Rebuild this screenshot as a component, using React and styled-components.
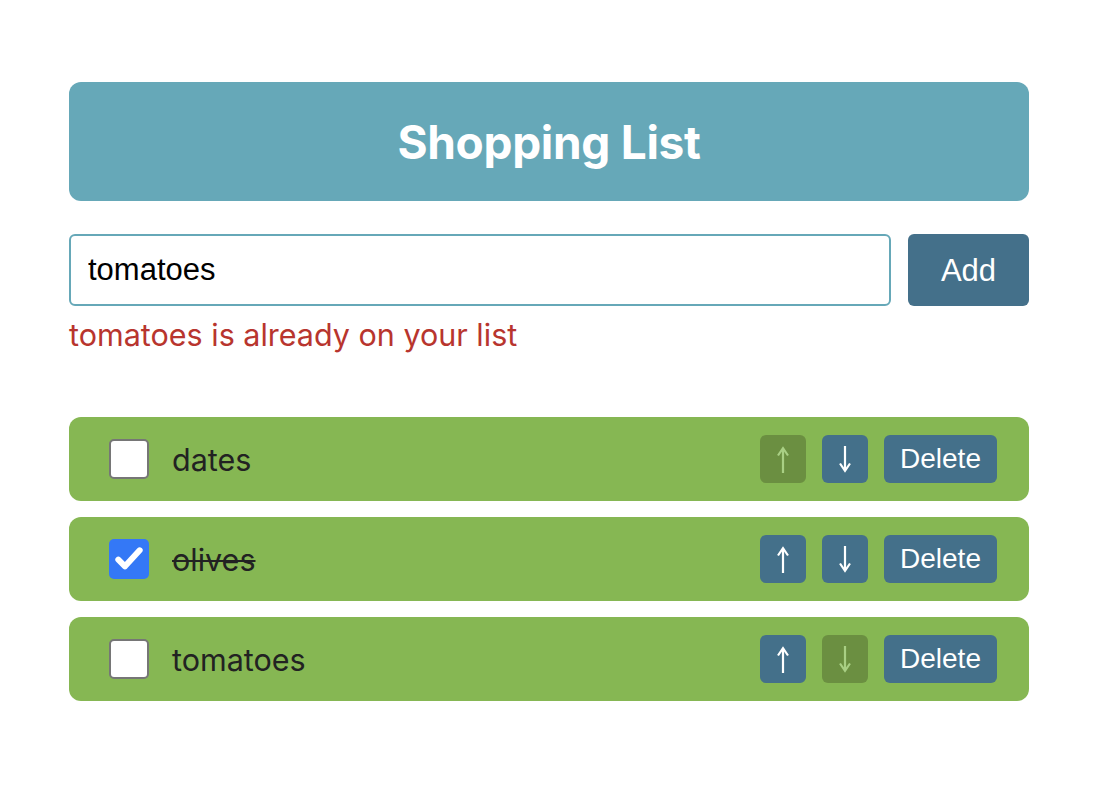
import styled, { createGlobalStyle } from "styled-components";
import { useState } from "react";

const GlobalStyle = createGlobalStyle`
  body {
    margin: 0;
    background: #fff;
    font-family: Inter, "Noto Sans", sans-serif;
  }
`;

const Page = styled.div`
  width: 960px;
  padding: 82px 0 40px 69px;
`;

const Header = styled.header`
  height: 119px;
  border-radius: 12px;
  background: #66a8b8;
  display: flex;
  align-items: center;
  justify-content: center;
`;

const Title = styled.h1`
  margin: 0;
  color: #fff;
  font-size: 46px;
  font-weight: 700;
  letter-spacing: -0.3px;
`;

const Form = styled.form`
  display: flex;
  gap: 17px;
  margin-top: 33px;
`;

const Input = styled.input`
  flex: 1;
  height: 72px;
  box-sizing: border-box;
  border: 2px solid #66a8b8;
  border-radius: 6px;
  padding: 0 17px;
  font-family: "Liberation Sans", Arial, sans-serif;
  font-size: 31px;
  color: #000;
  outline: none;
`;

const Button = styled.button`
  height: ${(p) => p.$height || 48}px;
  width: ${(p) => p.$width}px;
  border: none;
  border-radius: 6px;
  padding: 0;
  background: ${(p) => (p.disabled ? "#6b8f41" : "#44708a")};
  color: ${(p) => (p.disabled ? "#a9cf84" : "#fff")};
  font-family: "Liberation Sans", Arial, sans-serif;
  font-size: ${(p) => p.$size || 28}px;
  line-height: 1;
  display: flex;
  align-items: center;
  justify-content: center;
  cursor: ${(p) => (p.disabled ? "default" : "pointer")};
`;

const Error = styled.p`
  margin: 11px 0 0;
  color: #b8352e;
  font-size: 30.5px;
  line-height: 36px;
`;

const List = styled.ul`
  list-style: none;
  margin: 64px 0 0;
  padding: 0;
  display: flex;
  flex-direction: column;
  gap: 16px;
`;

const Row = styled.li`
  height: 84px;
  box-sizing: border-box;
  padding: 0 32px 0 40px;
  border-radius: 12px;
  background: #86b753;
  display: flex;
  align-items: center;
`;

const Check = styled.span`
  width: 40px;
  height: 40px;
  box-sizing: border-box;
  border-radius: 5px;
  border: ${(p) => (p.$checked ? "none" : "2px solid #767676")};
  background: ${(p) => (p.$checked ? "#3478f6" : "#fff")};
  display: flex;
  align-items: center;
  justify-content: center;
  cursor: pointer;
  flex-shrink: 0;
`;

const Name = styled.span`
  margin-left: 23px;
  flex: 1;
  font-size: 30.5px;
  color: #222;
  text-decoration: ${(p) => (p.$done ? "line-through" : "none")};
  text-decoration-thickness: 2px;
`;

const Actions = styled.div`
  display: flex;
  gap: 16px;
`;

// thin arrow glyph, pointing up unless $down
const ArrowIcon = ({ down }) => (
  <svg
    width="12"
    height="27"
    viewBox="0 0 12 27"
    style={down ? { transform: "rotate(180deg)" } : undefined}
  >
    <path d="M6 2.5V27" stroke="currentColor" strokeWidth="2.2" fill="none" />
    <path
      d="M1 9.5L6 2.2L11 9.5"
      stroke="currentColor"
      strokeWidth="2.2"
      fill="none"
      strokeLinejoin="miter"
    />
  </svg>
);

const initial = [
  { name: "dates", done: false },
  { name: "olives", done: true },
  { name: "tomatoes", done: false },
];

const App = () => {
  const [items, setItems] = useState(initial);
  const [text, setText] = useState("tomatoes");
  const [error, setError] = useState("tomatoes is already on your list");

  const add = (e) => {
    e.preventDefault();
    const v = text.trim();
    if (!v) return;
    if (items.some((i) => i.name === v)) {
      setError(`${v} is already on your list`);
      return;
    }
    setItems([...items, { name: v, done: false }]);
    setError("");
    setText("");
  };

  const move = (idx, dir) => {
    const next = [...items];
    const [it] = next.splice(idx, 1);
    next.splice(idx + dir, 0, it);
    setItems(next);
  };

  const toggle = (idx) =>
    setItems(items.map((it, i) => (i === idx ? { ...it, done: !it.done } : it)));

  const remove = (idx) => setItems(items.filter((_, i) => i !== idx));

  return (
    <>
      <GlobalStyle />
      <Page>
        <Header>
          <Title>Shopping List</Title>
        </Header>
        <Form onSubmit={add}>
          <Input value={text} onChange={(e) => setText(e.target.value)} />
          <Button type="submit" $width={121} $height={72} $size={31}>
            Add
          </Button>
        </Form>
        {error && <Error>{error}</Error>}
        <List>
          {items.map((it, i) => (
            <Row key={it.name}>
              <Check $checked={it.done} onClick={() => toggle(i)}>
                {it.done && (
                  <svg width="32" height="32" viewBox="0 0 24 24">
                    <path
                      d="M4 12.5l5 5L20 5.5"
                      fill="none"
                      stroke="#fff"
                      strokeWidth="4.5"
                      strokeLinecap="round"
                      strokeLinejoin="round"
                    />
                  </svg>
                )}
              </Check>
              <Name $done={it.done}>{it.name}</Name>
              <Actions>
                <Button
                  $width={46}
                  aria-label="Move up"
                  disabled={i === 0}
                  onClick={() => move(i, -1)}
                >
                  <ArrowIcon />
                </Button>
                <Button
                  $width={46}
                  aria-label="Move down"
                  disabled={i === items.length - 1}
                  onClick={() => move(i, 1)}
                >
                  <ArrowIcon down />
                </Button>
                <Button $width={113} onClick={() => remove(i)}>
                  Delete
                </Button>
              </Actions>
            </Row>
          ))}
        </List>
      </Page>
    </>
  );
};

export default App;
